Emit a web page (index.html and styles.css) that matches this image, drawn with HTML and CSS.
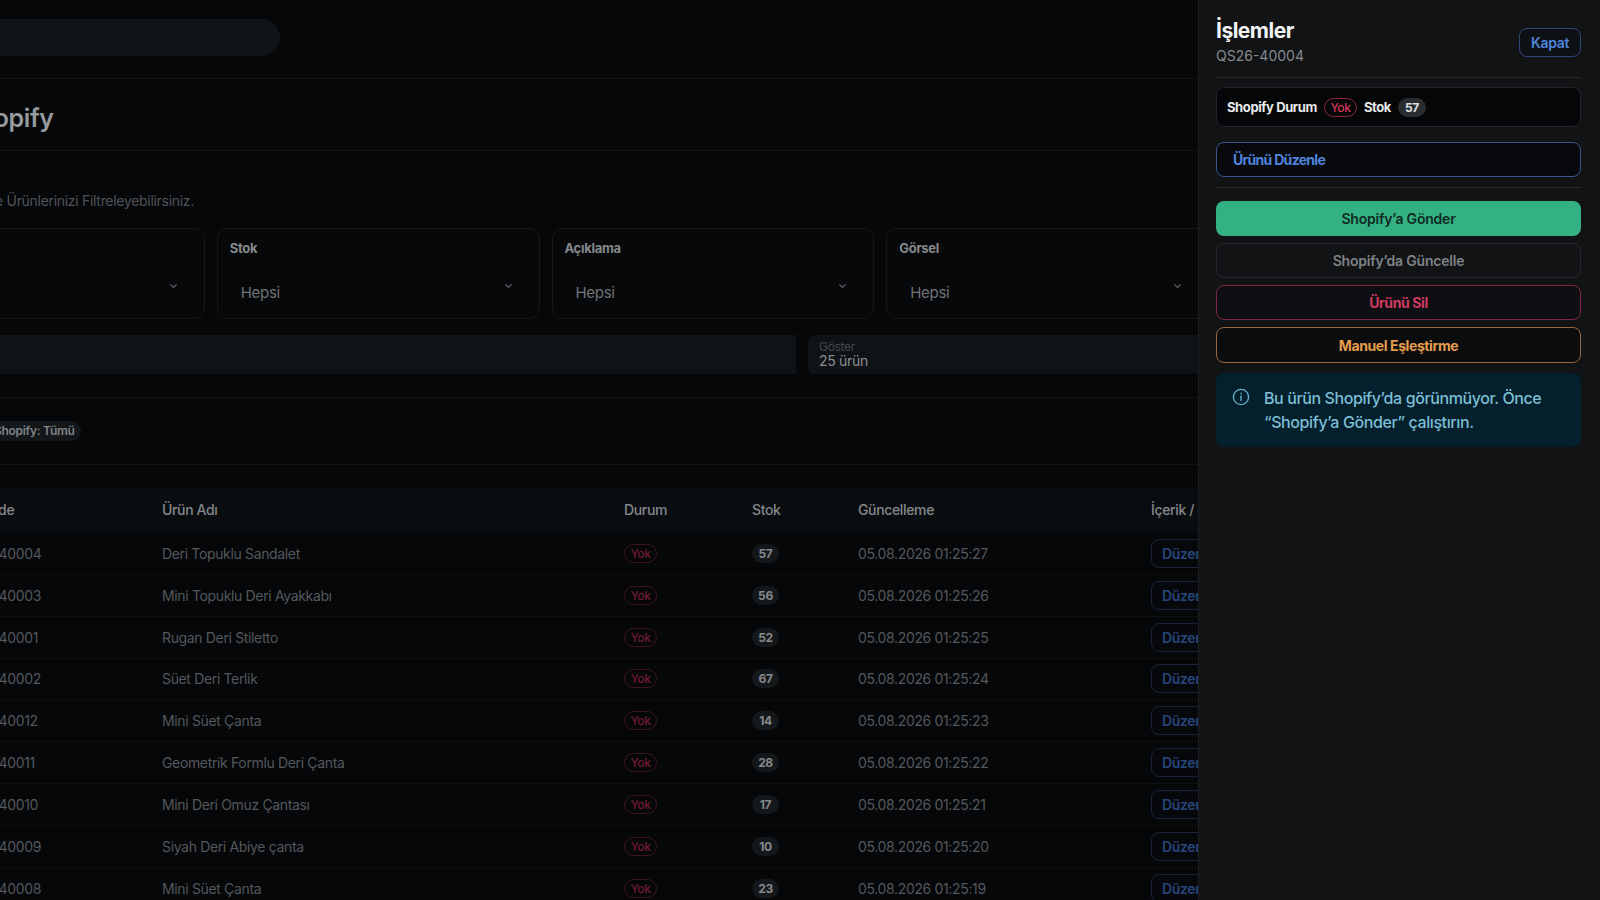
FILE: index.html
```
<!DOCTYPE html>
<html lang="tr">
<head>
<meta charset="utf-8">
<title>Shopify</title>
<link rel="stylesheet" href="styles.css">
</head>
<body>
<div class="app">
  <main class="main">
    <div class="inner">
      <header class="topbar"><div class="search"></div></header>
      <div class="titlebar"><h1>Shopify</h1></div>
      <section class="filters">
        <p class="sub">Duruma göre Ürünlerinizi Filtreleyebilirsiniz.</p>
        <div class="cards">
          <div class="card"><span class="lbl">Durum</span><div class="sel"><span class="val"></span><svg class="chev" viewBox="0 0 10 6"><path d="M1.5 1.2 5 4.6l3.5-3.4"/></svg></div></div>
          <div class="card"><span class="lbl">Stok</span><div class="sel"><span class="val">Hepsi</span><svg class="chev" viewBox="0 0 10 6"><path d="M1.5 1.2 5 4.6l3.5-3.4"/></svg></div></div>
          <div class="card"><span class="lbl">Açıklama</span><div class="sel"><span class="val">Hepsi</span><svg class="chev" viewBox="0 0 10 6"><path d="M1.5 1.2 5 4.6l3.5-3.4"/></svg></div></div>
          <div class="card"><span class="lbl">Görsel</span><div class="sel"><span class="val">Hepsi</span><svg class="chev" viewBox="0 0 10 6"><path d="M1.5 1.2 5 4.6l3.5-3.4"/></svg></div></div>
        </div>
        <div class="searchrow">
          <div class="field"></div>
          <div class="field show"><span class="show-l">Göster</span><span class="show-v">25 ürün</span></div>
        </div>
      </section>
      <section class="chips"><span class="chip">Shopify: Tümü</span></section>
      <section class="table">
        <div class="row head"><span>Barcode</span><span>Ürün Adı</span><span>Durum</span><span>Stok</span><span>Güncelleme</span><span>İçerik / İşlem</span></div>
        <div class="row"><span class="code">QS26-40004</span><span>Deri Topuklu Sandalet</span><span><b class="yok">Yok</b></span><span><b class="num">57</b></span><span>05.08.2026 01:25:27</span><span><a class="edit">Düzenle</a></span></div>
        <div class="row"><span class="code">QS26-40003</span><span>Mini Topuklu Deri Ayakkabı</span><span><b class="yok">Yok</b></span><span><b class="num">56</b></span><span>05.08.2026 01:25:26</span><span><a class="edit">Düzenle</a></span></div>
        <div class="row"><span class="code">QS26-40001</span><span>Rugan Deri Stiletto</span><span><b class="yok">Yok</b></span><span><b class="num">52</b></span><span>05.08.2026 01:25:25</span><span><a class="edit">Düzenle</a></span></div>
        <div class="row"><span class="code">QS26-40002</span><span>Süet Deri Terlik</span><span><b class="yok">Yok</b></span><span><b class="num">67</b></span><span>05.08.2026 01:25:24</span><span><a class="edit">Düzenle</a></span></div>
        <div class="row"><span class="code">QS26-40012</span><span>Mini Süet Çanta</span><span><b class="yok">Yok</b></span><span><b class="num">14</b></span><span>05.08.2026 01:25:23</span><span><a class="edit">Düzenle</a></span></div>
        <div class="row"><span class="code">QS26-40011</span><span>Geometrik Formlu Deri Çanta</span><span><b class="yok">Yok</b></span><span><b class="num">28</b></span><span>05.08.2026 01:25:22</span><span><a class="edit">Düzenle</a></span></div>
        <div class="row"><span class="code">QS26-40010</span><span>Mini Deri Omuz Çantası</span><span><b class="yok">Yok</b></span><span><b class="num">17</b></span><span>05.08.2026 01:25:21</span><span><a class="edit">Düzenle</a></span></div>
        <div class="row"><span class="code">QS26-40009</span><span>Siyah Deri Abiye çanta</span><span><b class="yok">Yok</b></span><span><b class="num">10</b></span><span>05.08.2026 01:25:20</span><span><a class="edit">Düzenle</a></span></div>
        <div class="row"><span class="code">QS26-40008</span><span>Mini Süet Çanta</span><span><b class="yok">Yok</b></span><span><b class="num">23</b></span><span>05.08.2026 01:25:19</span><span><a class="edit">Düzenle</a></span></div>
      </section>
    </div>
  </main>
  <aside class="panel">
    <div class="p-head">
      <div><h2>İşlemler</h2><div class="p-code">QS26-40004</div></div>
      <button class="kapat">Kapat</button>
    </div>
    <div class="status"><span>Shopify Durum</span><b class="p-yok">Yok</b><span>Stok</span><b class="p-num">57</b></div>
    <button class="btn btn-edit">Ürünü Düzenle</button>
    <div class="sep"></div>
    <div class="actions">
      <button class="btn btn-green">Shopify’a Gönder</button>
      <button class="btn btn-gray">Shopify’da Güncelle</button>
      <button class="btn btn-red">Ürünü Sil</button>
      <button class="btn btn-orange">Manuel Eşleştirme</button>
    </div>
    <div class="info">
      <svg class="info-i" viewBox="0 0 18 18"><circle cx="9" cy="9" r="7.6"/><path d="M9 8.2v4.4"/><path class="dot" d="M9 5.3v.6"/></svg>
      <p>Bu ürün Shopify’da görünmüyor. Önce “Shopify’a Gönder” çalıştırın.</p>
    </div>
  </aside>
</div>
</body>
</html>
```
FILE: styles.css
```
* { box-sizing: border-box; }
html, body { margin: 0; height: 100%; }
body {
  background: #050709;
  color: #8a8e92;
  font-family: "Inter", "Noto Sans", sans-serif;
  letter-spacing: -0.3px;
  overflow: hidden;
}
.app { display: flex; height: 900px; width: 1600px; overflow: hidden; }
.main { width: 1198px; flex: none; overflow: hidden; height: 900px; }
.inner { width: 1327px; margin-left: -118px; }

.topbar { height: 79px; border-bottom: 1px solid #121518; padding-top: 19px; }
.search { width: 398px; height: 37px; background: #101417; border-radius: 19px; }

.titlebar { height: 72px; border-bottom: 1px solid #121518; display: flex; align-items: center; padding: 7px 0 0 81px; }
h1 { margin: 0; font-size: 25px; font-weight: 600; color: #969a9d; letter-spacing: -0.4px; }

.filters { height: 247px; border-bottom: 1px solid #121518; }
.sub { margin: 0; padding: 41px 0 0 38px; height: 77px; font-size: 14px; line-height: 18px; color: #4f5357; }
.cards { display: grid; grid-template-columns: repeat(4, 1fr); gap: 12px; }
.card { height: 91px; border: 1px solid #15181b; border-radius: 10px; padding: 10px 12px 0; background: #06080a; }
.lbl { display: block; font-size: 13px; line-height: 18px; font-weight: 700; color: #85888b; }
.sel { display: flex; align-items: center; justify-content: space-between; margin-top: 22px; padding: 0 14px 0 11px; height: 24px; }
.val { font-size: 15px; color: #6f7478; position: relative; top: 1px; }
.chev { width: 9px; height: 6px; fill: none; stroke: #5d6165; stroke-width: 1.4; margin-top: -10px; }

.searchrow { display: grid; grid-template-columns: 914px 1fr; gap: 12px; margin-top: 16px; }
.field { height: 39px; background: #101316; border-radius: 0 0 2px 0; }
.show { border-radius: 6px; padding: 5px 11px 0; display: flex; flex-direction: column; }
.show-l { font-size: 12px; line-height: 13px; color: #454a4f; }
.show-v { font-size: 14px; line-height: 16px; color: #8a8e92; }

.chips { height: 67px; border-bottom: 1px solid #121518; display: flex; align-items: center; padding-left: 102px; }
.chip { height: 20px; padding: 0 6px 0 10px; border-radius: 10px; background: #14171a; font-size: 12px; font-weight: 600; line-height: 20px; color: #7f8386; white-space: nowrap; }

.table { margin-top: 23px; }
.row {
  display: grid;
  grid-template-columns: 205px 462px 128px 106px 293px 1fr;
  align-items: center;
  height: 41.85px;
  padding-left: 75px;
  border-bottom: 1px solid #0f1215;
  font-size: 14px;
  color: #54585c;
  white-space: nowrap;
  letter-spacing: -0.35px;
}
.row.head { height: 45px; padding-bottom: 3px; background: #0a0d10; border-bottom: 0; color: #84888c; font-size: 14px; font-weight: 500; }
.row.head span:first-child { margin-left: 4px; }
.code { color: #54585c; }
.yok { display: inline-block; width: 33px; height: 19px; border: 1px solid #3d1420; border-radius: 10px; color: #701b30; font-size: 12px; font-weight: 500; line-height: 17px; text-align: center; }
.num { display: inline-block; width: 27px; height: 19px; border-radius: 10px; background: #14181b; color: #85888b; font-size: 12px; font-weight: 700; line-height: 19px; text-align: center; }
.edit { display: block; width: 80px; height: 29px; padding-left: 10px; border: 1px solid #18253a; border-radius: 8px; background: #06080b; color: #27467c; font-size: 14px; font-weight: 600; line-height: 27px; }

.panel { width: 402px; flex: none; background: #111315; border-left: 1px solid #1d2023; padding: 0 19px 0 17px; height: 900px; }
.p-head { display: flex; justify-content: space-between; align-items: flex-start; height: 78px; border-bottom: 1px solid #24272a; padding-top: 18px; }
h2 { margin: 0; font-size: 21px; line-height: 26px; font-weight: 700; color: #f2f3f4; letter-spacing: -0.5px; }
.p-code { font-size: 14px; line-height: 20px; color: #85898d; margin-top: 2px; letter-spacing: 0; }
.kapat { margin-top: 10px; width: 62px; height: 29px; border: 1px solid #2c4a78; border-radius: 8px; background: #0d1014; color: #4f84dc; font: 600 14px "Inter", sans-serif; letter-spacing: -0.3px; padding: 0; }
.status { margin-top: 9px; height: 40px; display: flex; align-items: center; gap: 7px; padding: 0 10px; background: #050608; border: 1px solid #212428; border-radius: 8px; font-size: 13px; font-weight: 700; color: #e8e9ea; letter-spacing: -0.4px; }
.p-yok { width: 33px; height: 19px; border: 1px solid #8f2438; border-radius: 10px; color: #d8365a; font-size: 12px; font-weight: 500; line-height: 17px; text-align: center; }
.p-num { width: 28px; height: 19px; border-radius: 10px; background: #2a2d30; color: #dfe0e1; font-size: 12px; font-weight: 700; line-height: 19px; text-align: center; }
.btn { display: block; width: 100%; height: 35px; border-radius: 8px; font: 700 14px "Inter", sans-serif; letter-spacing: -0.4px; padding: 0; background: transparent; text-align: center; }
.btn-edit { margin-top: 15px; background: #07090d; border: 1px solid #35578f; color: #4f84dc; text-align: left; padding-left: 16px; letter-spacing: -0.7px; }
.sep { margin-top: 10px; height: 1px; background: #24272a; }
.actions { display: flex; flex-direction: column; gap: 7px; margin-top: 13px; }
.btn-green { background: #33b183; border: 0; color: #0f2b22; font-weight: 600; letter-spacing: -0.2px; }
.btn-gray { border: 1px solid #24272b; color: #7d8286; font-weight: 600; letter-spacing: -0.2px; }
.btn-red { border: 1px solid #7e2a44; color: #cf3a60; background: #0e0f12; }
.btn-orange { border: 1px solid #98693a; color: #e59c4d; background: #0b0c0e; height: 36px; }
.info { display: flex; gap: 14px; margin-top: 10px; height: 74px; padding: 13px 16px 0; background: #03202c; border-radius: 8px; }
.info-i { width: 18px; height: 18px; flex: none; margin-top: 2px; fill: none; stroke: #64aec9; stroke-width: 1.4; stroke-linecap: round; }
.info p { margin: 0; font-size: 16px; line-height: 24px; font-weight: 500; color: #7dbdd5; letter-spacing: -0.4px; }
```
